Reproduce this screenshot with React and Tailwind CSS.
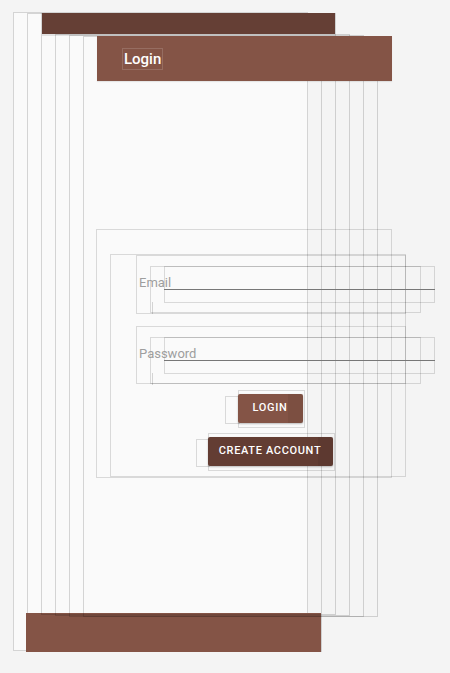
import React from "react";

// exploded 3D layer view: each layer of the screen is drawn a bit to the right of the one behind it
const layers = [
    "left-[13px] top-[12px] w-[295px] h-[639px] bg-[#fafafa]",
    "left-[27px] top-[13px] w-[295px] h-[639px]",
    "left-[41px] top-[13px] w-[295px] h-[602px]",
    "left-[55px] top-[34px] w-[295px] h-[582px]",
    "left-[69px] top-[35px] w-[295px] h-[582px]",
    "left-[83px] top-[36px] w-[295px] h-[581px]",
];

const Field = ({ label, tall }) => (
    <div className={"relative w-[270px] border border-black/[0.13] " + (tall ? "h-[59px]" : "h-[58px]")}>
        <div className="ml-[13px] mt-[10px] w-[271px] h-[47px] border border-black/[0.13] flex">
            <div className="shrink-0 w-px h-[12px] mt-[35px] ml-px bg-black/15" />
            <div className="shrink-0 ml-[11px] -mt-px w-[271px] h-[37px] border border-black/[0.13] flex flex-col pt-[22px]">
                <div className="h-px -mx-px bg-[#777]" />
            </div>
        </div>
        <span className="absolute left-[2px] top-[19px] text-[13px] leading-[16px] text-[#9e9e9e]">{label}</span>
    </div>
);

const LayerButton = ({ children, dark, frame, ghost }) => (
    <div className={"relative h-[38px] border border-black/[0.13] pt-[3px] " + frame}>
        <div className={"absolute top-[5px] h-[28px] border border-black/[0.13] " + ghost} />
        <button
            className={
                "relative w-full h-[29px] -ml-px rounded-[2px] text-white text-[11px] font-medium tracking-[0.06em] flex items-center justify-center shadow-[0_1px_2px_rgba(0,0,0,0.25)] " +
                (dark ? "bg-[#633d33]" : "bg-[#845446]")
            }
        >
            {children}
            <span className="absolute right-0 top-0 w-[15px] h-full bg-black/[0.06]" />
        </button>
    </div>
);

const App = () => {
    return (
        <div className="relative w-[450px] h-[673px] overflow-hidden bg-[#f4f4f4] font-['Roboto',sans-serif]">
            {/* window layers */}
            {layers.map((c, i) => (
                <div key={i} className={"absolute flex flex-col border border-black/[0.15] " + c}>
                    {i === 1 && <div className="mt-auto -mb-px -ml-[2px] h-[39px] bg-[#845446]" />}
                    {i === 2 && (
                        <>
                            <div className="-mt-px h-[21px] bg-[#653f35]" />
                            <div className="h-[2px] bg-[#e2e2e2]" />
                        </>
                    )}
                </div>
            ))}

            {/* toolbar layer */}
            <div className="absolute left-[97px] top-[36px] w-[295px] h-[45px] bg-[#845446] flex items-center pl-[25px] shadow-[0_1px_1px_rgba(0,0,0,0.08)]">
                <span className="px-px border border-white/15 text-[15px] leading-[20px] font-medium text-white">
                    Login
                </span>
            </div>

            {/* form card layers */}
            <div className="absolute left-[96px] top-[229px] w-[296px] h-[249px] border border-black/[0.13] pl-[13px] pt-[25px]">
                <div className="w-[296px] h-[223px] border border-black/[0.13] flex flex-col pl-[25px] -mt-px">
                    <Field label="Email" tall />
                    <div className="mt-[12px]">
                        <Field label="Password" />
                    </div>
                    <div className="flex flex-col items-center w-[270px] mt-[6px] gap-[5px]">
                        <LayerButton frame="w-[67px]" ghost="-left-[14px] w-[15px]">
                            LOGIN
                        </LayerButton>
                        <LayerButton dark frame="w-[127px]" ghost="-left-[13px] w-[14px]">
                            CREATE ACCOUNT
                        </LayerButton>
                    </div>
                </div>
            </div>
        </div>
    );
};

export default App;
